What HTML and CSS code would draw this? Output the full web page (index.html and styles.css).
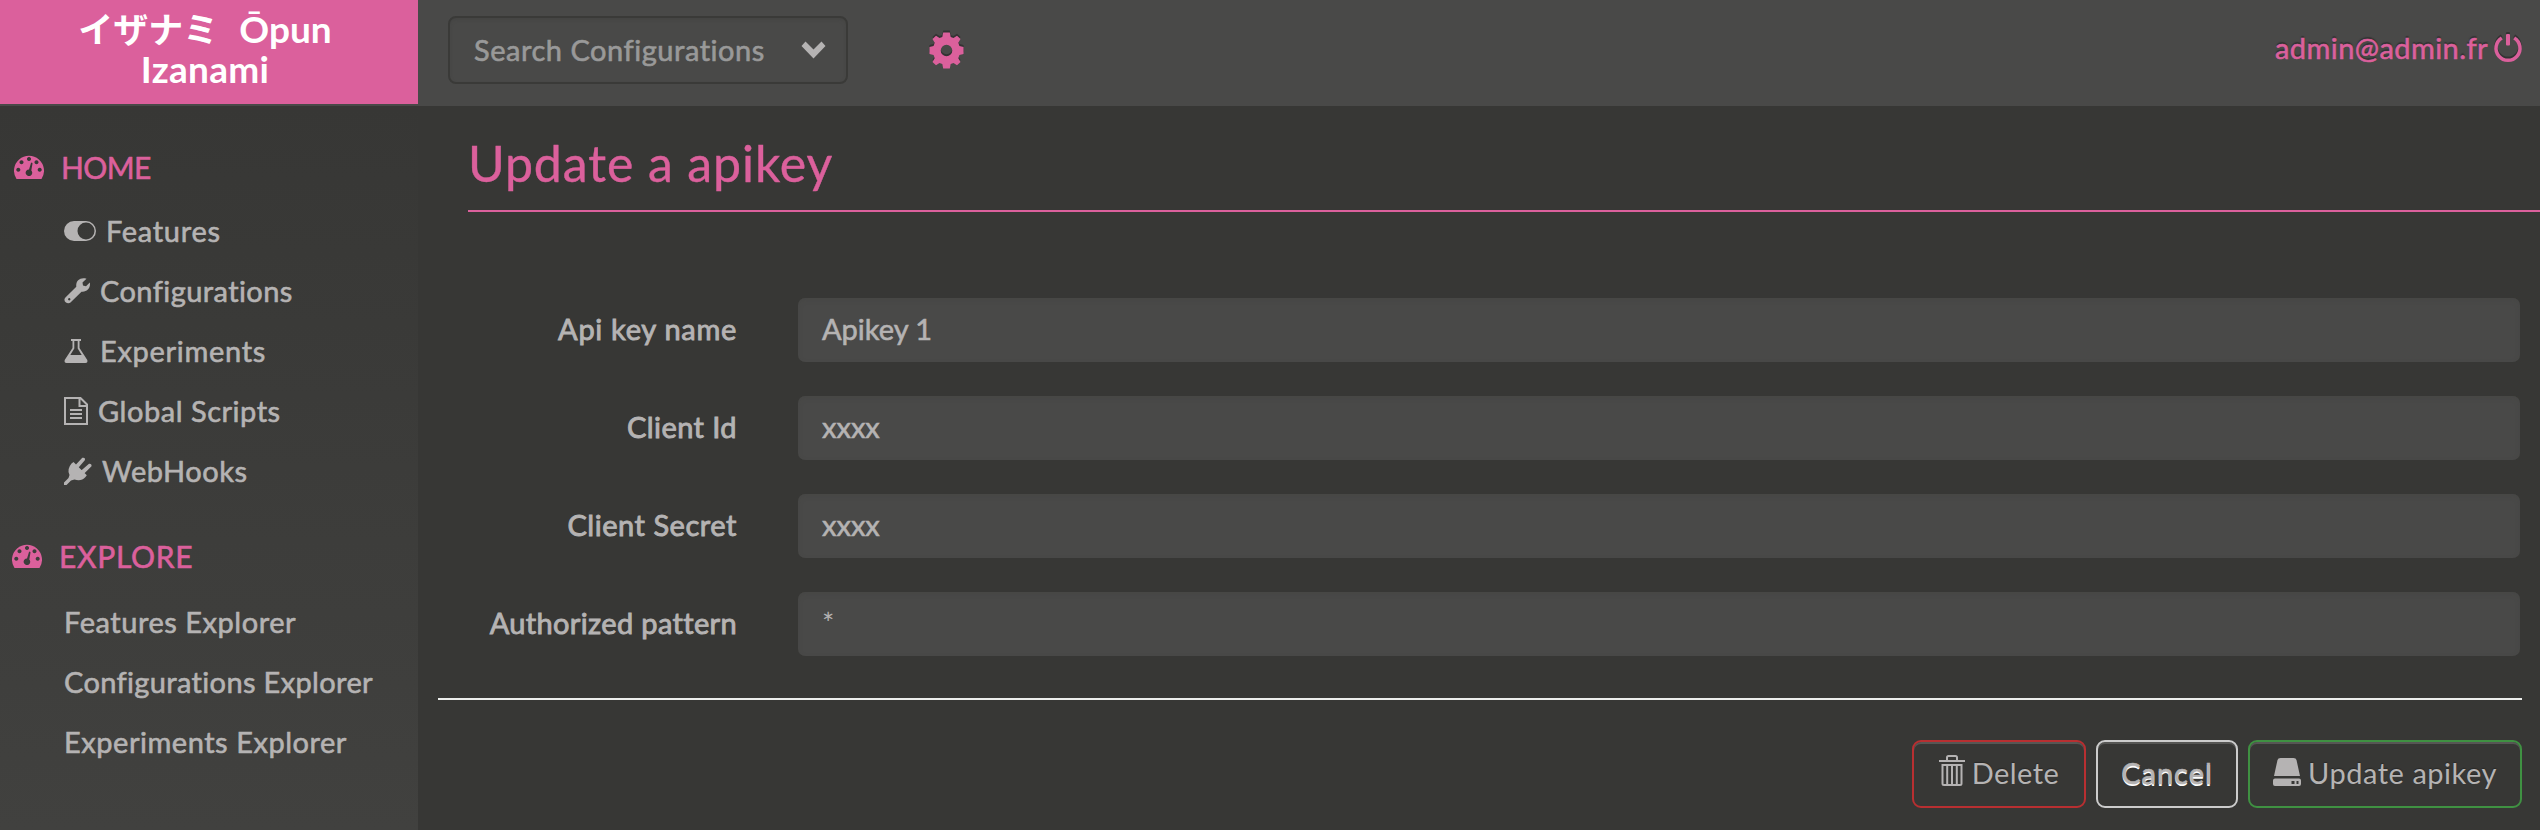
FILE: index.html
```html
<!DOCTYPE html>
<html lang="en">
<head>
<meta charset="utf-8">
<title>Izanami</title>
<link rel="stylesheet" href="styles.css">
</head>
<body>
<header class="topbar">
  <a class="brand"><span class="brand-line"><span class="brand-jp">イザナミ</span><span class="brand-en">Ōpun</span></span><span class="brand-line brand-name">Izanami</span></a>
  <div class="search"><span class="t ls-5">Search Configurations</span>
    <svg class="chevron" viewBox="0 0 24 18"><path d="M4 0.500 12 8.500 20 .5 24 5 12 17.500 0 5z"/></svg>
  </div>
  <svg class="gear" viewBox="-17.500 -18.500 35 37"><g class="gear-shadow" transform="translate(0 -2)"><use href="#gear"/></g><path id="gear" fill-rule="evenodd" d="M-3.300-18H3.300L4.200-13.500 7-12.400 10.500-14.800 14-11.400 11.800-7.700 12.900-4.500 17-3.400V3.400L12.900 4.500 11.800 7.700 14 11.400 10.500 14.800 7 12.400 4.200 13.500 3.300 18H-3.300L-4.200 13.500-7 12.400-10.500 14.800-14 11.400-11.800 7.700-12.900 4.500-17 3.400V-3.400L-12.900-4.500-11.800-7.700-14-11.400-10.500-14.800-7-12.400-4.200-13.500zM0-5.800A5.800 5.800 0 1 0 0 5.800 5.800 5.800 0 1 0 0-5.800z"/></svg>
  <a class="user"><span class="t ls-4">admin@admin.fr</span>
    <svg class="power" viewBox="0 0 28 30"><path d="M7.800 5A12 12 0 1 0 20.200 5"/><rect x="12" y="1" width="4" height="11.500" rx="1"/></svg>
  </a>
</header>
<div class="layout">
  <nav class="sidebar">
    <h2 class="group home"><svg class="tacho" viewBox="0 0 30 24"><use href="#tacho"/></svg><span class="t">HOME</span></h2>
    <ul class="menu">
      <li class="i-features"><svg viewBox="0 0 32 20" width="32" height="20"><path fill-rule="evenodd" d="M10 0H22A10 10 0 0 1 22 20H10A10 10 0 0 1 10 0zM22 1.500A8.500 8.500 0 1 0 22 18.500 8.500 8.500 0 1 0 22 1.500z"/></svg><span class="t ls-7">Features</span></li>
      <li class="i-config"><svg viewBox="0 0 26 26" width="26" height="26"><path fill-rule="evenodd" d="M22.500.7 18.500 4.500 19 7.500 22 8.200 25.800 4.600C27 10 22.500 14.500 17.500 13.700L6.500 24.600C3.500 27-1.500 23 1.200 19.700L12.300 8.700C11.500 3 16-1.200 22.500.7zM5.200 20a1.200 1.200 0 1 0 .1 0z"/></svg><span class="t ls-4">Configurations</span></li>
      <li class="i-exp"><svg viewBox="0 0 24 24" width="24" height="24"><path fill-rule="evenodd" d="M7 0H17V2H15.500V9L23.300 21Q24 24 21.500 24H2.500Q0 24 .7 21L8.500 9V2H7zM10.300 2V9.500L6.300 16H17.700L13.700 9.500V2z"/></svg><span class="t ls-7">Experiments</span></li>
      <li class="i-script"><svg viewBox="0 0 24 28" width="24" height="28"><path class="line" d="M1 1H16.500L23 7.500V27H1zM15.500 1V9H23M6 13H18M6 17H18M6 21H18"/></svg><span class="t ls-5">Global Scripts</span></li>
      <li class="i-hook"><svg viewBox="0 0 28 28" width="28" height="28"><path d="M7.500 6.500 9.500 5 22.800 18.300 21.500 20Q17 25 10.500 22.500L7 23.500 2.500 28H0V25.500L4.500 21 5.500 18Q2.500 12.500 7.500 6.500zM12 7.500 18.300.8Q21.500 0 21 3L14.800 10.300zM17.500 13.300 25 6.800Q28 6.500 27.500 9.300L20.500 16.300z"/></svg><span class="t ls-5">WebHooks</span></li>
    </ul>
    <h2 class="group explore"><svg class="tacho" viewBox="0 0 30 24"><path id="tacho" fill-rule="evenodd" d="M2.500 24A15 15 0 1 1 27.500 24zM15 2a2 2 0 1 0 .01 0zM7.500 5.200a2 2 0 1 0 .01 0zM22.500 5.200a2 2 0 1 0 .01 0zM4.300 12.800a2 2 0 1 0 .01 0zM25.700 12.800a2 2 0 1 0 .01 0zM17 8 15 14.500A3.300 3.300 0 1 0 17.300 15.500L18.500 8.500Q18 7 17 8z"/></svg><span class="t ls-7">EXPLORE</span></h2>
    <ul class="menu plain">
      <li><span class="t ls-5">Features Explorer</span></li>
      <li><span class="t ls-3">Configurations Explorer</span></li>
      <li><span class="t ls-5">Experiments Explorer</span></li>
    </ul>
  </nav>
  <main class="content">
    <h1 class="title"><span class="ls-9">Update a apikey</span></h1>
    <form class="form">
      <div class="row"><label class="t ls-7">Api key name</label><div class="field t">Apikey 1</div></div>
      <div class="row"><label class="t ls-4">Client Id</label><div class="field t">xxxx</div></div>
      <div class="row"><label class="t ls-5">Client Secret</label><div class="field t">xxxx</div></div>
      <div class="row"><label class="t ls-3">Authorized pattern</label><div class="field star">*</div></div>
    </form>
    <hr class="rule">
    <div class="actions">
      <button class="btn delete"><svg viewBox="0 0 26 31" width="26" height="31"><path class="line" d="M0 6H26M8 5V2.500Q8 1 9.500 1H16.500Q18 1 18 2.500V5M3.500 10V28.500Q3.500 30 5 30H21Q22.500 30 22.500 28.500V10zM8.200 10V29M13 10V29M17.800 10V29"/></svg><span class="ls-4">Delete</span></button>
      <button class="btn cancel"><span class="t">Cancel</span></button>
      <button class="btn update"><svg viewBox="0 0 28 28" width="28" height="28"><path fill-rule="evenodd" d="M7.500 0H20.500Q23 0 23.500 2L27 18H1L4.500 2Q5 0 7.500 0zM2 20.500H26Q28 20.500 28 22.500V26Q28 28 26 28H2Q0 28 0 26V22.500Q0 20.500 2 20.500zM18.500 23V26H21.500V23zM23.500 23V26H25.500V23z"/></svg><span class="ls-5">Update apikey</span></button>
    </div>
  </main>
</div>
</body>
</html>
```
FILE: styles.css
```css
* { box-sizing: border-box; }
body { margin: 0; background: #373735; color: #b5b3b3; font: 29px/60px Lato, "Noto Sans CJK JP", sans-serif; height: 830px; overflow: hidden; }
svg { display: block; fill: currentColor; flex: none; }
.line { fill: none; stroke: currentColor; stroke-width: 2; }
.t { white-space: nowrap; -webkit-text-stroke: .6px; }
.ls-3 { letter-spacing: .35px; }
.ls-4 { letter-spacing: .42px; }
.ls-5 { letter-spacing: .53px; }
.ls-7 { letter-spacing: .7px; }
.ls-9 { letter-spacing: .9px; }
.topbar { display: flex; height: 106px; background: #494948; align-items: flex-start; }
.brand { width: 418px; height: 104px; background: #db609c; color: #fff; display: flex; flex-direction: column; padding: 9px 8px 0 0; font-size: 37px; line-height: 40px; font-weight: 700; }
.brand-line { display: flex; justify-content: center; gap: 21px; height: 40px; }
.brand-jp { font-size: 35px; }
.brand-name { letter-spacing: .3px; }
.search { width: 400px; height: 68px; margin: 16px 0 0 30px; border: 2px solid #3a3a38; border-radius: 8px; padding: 0 20px 0 24px; display: flex; align-items: center; justify-content: space-between; color: #999; box-shadow: inset 0 2px 3px #41414080; }
.search .t { padding-bottom: 1px; }
.chevron { width: 25px; height: 18px; color: #b5b3b3; }
.gear { width: 35px; height: 37px; margin: 32px 0 0 81px; color: #db609c; overflow: visible; }
.gear-shadow { color: #333; }
.user { margin: 18px 18px 0 auto; display: flex; gap: 6px; color: #db609c; text-shadow: 0 -2px 1px #333; }
.power { width: 28px; height: 30px; margin-top: 15px; overflow: visible; filter: drop-shadow(0 -2px .5px #333); }
.power path { fill: none; stroke: currentColor; stroke-width: 3.500; }
.layout { display: flex; height: 724px; }
.sidebar { width: 418px; padding-top: 31px; background: linear-gradient(#373735, #41413f); }
.group { margin: 0; font-size: 30px; font-weight: 400; color: #db609c; display: flex; height: 60px; align-items: center; gap: 17px; padding-left: 14px; }
.group .t { padding-bottom: 1px; }
.home { letter-spacing: -.6px; }
.tacho { width: 30px; height: 24px; }
.explore { margin-top: 25px; padding-left: 12px; }
.menu { list-style: none; margin: 4px 0 0; padding: 0 0 0 64px; }
.menu.plain { margin-top: 6px; }
.menu li { display: flex; align-items: center; gap: 10px; height: 60px; }
.menu .i-exp { gap: 12px; }
.content { flex: 1; }
.title { margin: 0 0 0 50px; height: 106px; border-bottom: 2px solid #db609c; font-size: 50px; line-height: 115px; font-weight: 400; color: #db609c; -webkit-text-stroke: .4px; }
.form { margin: 86px 20px 0 0; display: grid; gap: 34px; }
.row { display: grid; grid-template-columns: 319px 1fr; column-gap: 61px; height: 64px; line-height: 62px; }
.row label { text-align: right; -webkit-text-stroke-width: .9px; }
.field { background: #494948; border-radius: 7px; padding-left: 24px; box-shadow: inset 0 2px 4px #43434280; }
.rule { border: 0; height: 2px; margin: 42px 18px 40px 20px; background: #eceeec; }
.actions { display: flex; justify-content: flex-end; gap: 10px; margin-right: 18px; }
.btn { height: 68px; border: 2px solid; border-radius: 9px; background: none; font: inherit; color: #b5b3b3; padding: 0 0 3px; display: flex; align-items: center; justify-content: center; box-shadow: inset 0 2px #565654; text-shadow: 0 -1px 1px #0004; }
.delete { width: 174px; border-color: #b82f31; gap: 7px; }
.delete svg { margin-bottom: 4px; }
.cancel { width: 142px; border-color: #ccc; text-shadow: 0 2px #fff; letter-spacing: 1px; }
.cancel .t { -webkit-text-stroke-width: .6px; }
.update { width: 274px; border-color: #3f9142; gap: 7px; }
.update svg { margin-bottom: 1px; }
```
